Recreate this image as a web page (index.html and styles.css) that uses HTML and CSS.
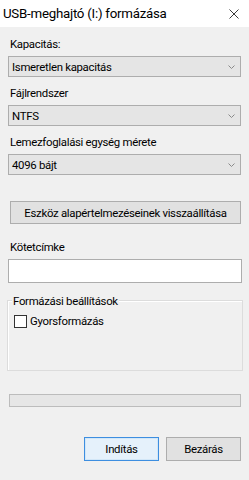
FILE: index.html
```html
<!DOCTYPE html>
<html lang="hu">
<head>
<meta charset="utf-8">
<title>USB-meghajtó (I:) formázása</title>
<link rel="stylesheet" href="styles.css">
</head>
<body>
<div class="window">
  <div class="titlebar">
    <span class="title">USB-meghajtó (I:) formázása</span>
    <svg class="close" width="10" height="10" viewBox="0 0 10 10"><path d="M0.5 0.5 L9.5 9.5 M9.5 0.5 L0.5 9.5" stroke="#3a3a3a" stroke-width="1" fill="none"/></svg>
  </div>
  <div class="content">
    <div class="field f1">
      <div class="label">Kapacitás:</div>
      <div class="combo"><span>Ismeretlen kapacitás</span><svg class="chev" width="7" height="4" viewBox="0 0 7 4"><path d="M0.5 0.5 L3.5 3.5 L6.5 0.5" stroke="#8a8a8a" fill="none"/></svg></div>
    </div>
    <div class="field f2">
      <div class="label">Fájlrendszer</div>
      <div class="combo"><span>NTFS</span><svg class="chev" width="7" height="4" viewBox="0 0 7 4"><path d="M0.5 0.5 L3.5 3.5 L6.5 0.5" stroke="#8a8a8a" fill="none"/></svg></div>
    </div>
    <div class="field f3">
      <div class="label">Lemezfoglalási egység mérete</div>
      <div class="combo"><span>4096 bájt</span><svg class="chev" width="7" height="4" viewBox="0 0 7 4"><path d="M0.5 0.5 L3.5 3.5 L6.5 0.5" stroke="#8a8a8a" fill="none"/></svg></div>
    </div>
    <div class="btn reset">Eszköz alapértelmezéseinek visszaállítása</div>
    <div class="field f4">
      <div class="label">Kötetcímke</div>
      <div class="textbox"></div>
    </div>
    <div class="group">
      <div class="legend">Formázási beállítások</div>
      <div class="check"><span class="box"></span><span>Gyorsformázás</span></div>
    </div>
    <div class="progress"></div>
    <div class="actions">
      <div class="btn default">Indítás</div>
      <div class="btn">Bezárás</div>
    </div>
  </div>
</div>
</body>
</html>
```

FILE: styles.css
```css
html, body {
  margin: 0;
  padding: 0;
}
body {
  width: 249px;
  height: 480px;
  background: #f0f0f0;
  font-family: Roboto, "Noto Sans", sans-serif;
  font-size: 11.4px;
  letter-spacing: -0.3px;
  color: #000;
  overflow: hidden;
}
.window {
  width: 249px;
  height: 480px;
  display: flex;
  flex-direction: column;
}
.titlebar {
  height: 27px;
  background: #fff;
  display: flex;
  align-items: center;
  justify-content: space-between;
  padding: 0 10px 0 3px;
  box-sizing: border-box;
}
.title {
  font-size: 13.3px;
  letter-spacing: -0.25px;
  color: #000;
}
.close {
  display: block;
}
.content {
  padding: 0 0 0 8px;
  display: flex;
  flex-direction: column;
}
.label {
  height: 16px;
  line-height: 16px;
  margin-bottom: 4px;
  padding-left: 2px;
}
.f1 { margin-top: 9px; }
.f2 { margin-top: 8px; }
.f3 { margin-top: 8px; }
.combo {
  width: 233px;
  height: 21px;
  box-sizing: border-box;
  background: #e5e5e5;
  border: 1px solid #adadad;
  display: flex;
  align-items: center;
  justify-content: space-between;
  padding: 0 5px 0 3px;
}
.chev { display: block; }
.btn {
  height: 24px;
  box-sizing: border-box;
  background: #e1e1e1;
  border: 1px solid #adadad;
  display: flex;
  align-items: center;
  justify-content: center;
}
.reset {
  margin-top: 26px;
  margin-left: 2px;
  width: 231px;
  height: 23px;
}
.f4 { margin-top: 15px; }
.textbox {
  width: 234px;
  height: 24px;
  box-sizing: border-box;
  background: #fff;
  border: 1px solid #adadad;
}
.group {
  margin-top: 17px;
  margin-left: -1px;
  width: 236px;
  height: 71px;
  box-sizing: border-box;
  border: 1px solid #dcdcdc;
  box-shadow: inset 1px 1px 0 #fff;
  position: relative;
  padding: 13px 0 0 6px;
}
.legend {
  position: absolute;
  top: -8px;
  left: 4px;
  padding: 0 1px;
  background: #f0f0f0;
  line-height: 16px;
}
.check {
  display: flex;
  align-items: center;
  gap: 3px;
}
.box {
  width: 13px;
  height: 13px;
  box-sizing: border-box;
  background: #fff;
  border: 1px solid #333;
}
.progress {
  margin-top: 23px;
  margin-left: 1px;
  width: 232px;
  height: 13px;
  box-sizing: border-box;
  background: #e6e6e6;
  border: 1px solid #bcbcbc;
}
.actions {
  margin-top: 30px;
  display: flex;
  gap: 7px;
  padding-left: 76px;
}
.actions .btn {
  width: 75px;
}
.btn.default {
  background: #e5f1fb;
  border: 1px solid #3d8ee0;
  box-shadow: inset 0 0 0 1px #d2e7f8;
}
```
